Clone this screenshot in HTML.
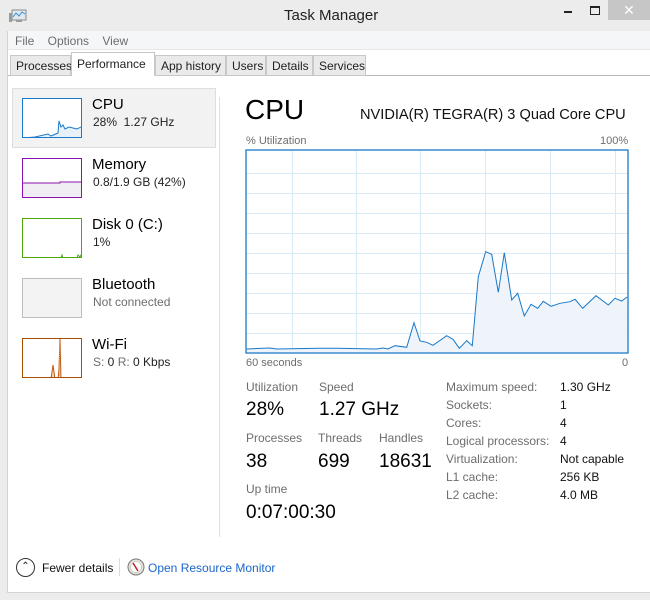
<!DOCTYPE html>
<html><head><style>
*{margin:0;padding:0;box-sizing:border-box}
body{width:650px;height:600px;overflow:hidden;background:#ececec;font-family:"Liberation Sans",sans-serif;position:relative;color:#000}
.a{position:absolute;white-space:nowrap}
.tab{position:absolute;top:55px;height:21px;border:1px solid #c8c8c8;background:#eaeaea;font-size:12px;padding:3px 0 0 5px;color:#222}
.lbl{font-size:12px;color:#6d6d6d}
.val{font-size:19px;color:#000}
.th{position:absolute;left:22px;width:60px;height:40px;background:#fff}
.sn{font-size:15px;color:#000}
.ss{font-size:12px;color:#222}
</style></head><body>
<div class="a" style="left:0;top:0;width:650px;height:31px;background:#ececec"></div>
<svg class="a" style="left:9px;top:9px" width="18" height="14"><rect x="3" y="1" width="14" height="10" fill="#dfe8ef" stroke="#8a8a8a"/><polyline points="4,8 7,4 10,7 13,3 16,5" fill="none" stroke="#3a8fd0" stroke-width="1"/><rect x="0" y="4" width="3" height="9" fill="#9a9a9a"/><rect x="7" y="11" width="6" height="2" fill="#9a9a9a"/></svg>
<div class="a" style="left:284px;top:7px;font-size:15px;color:#222">Task Manager</div>
<div class="a" style="left:564px;top:11px;width:8px;height:2px;background:#222"></div>
<div class="a" style="left:590px;top:6px;width:10px;height:9px;border:1px solid #222;border-top-width:2px"></div>
<div class="a" style="left:608px;top:0;width:42px;height:20px;background:#c6c6c6;color:#fff;font-size:14px;text-align:center;line-height:20px">✕</div>
<div class="a" style="left:7px;top:31px;width:643px;height:562px;background:#fff;border-left:1px solid #d4d4d4;border-bottom:1px solid #d4d4d4"></div>
<div class="a" style="left:8px;top:31px;width:642px;height:19px;background:#f5f6f7;border-bottom:1px solid #e6e6e6"></div>
<div class="a" style="left:15px;top:34px;font-size:12px;color:#6d6d6d">File&nbsp;&nbsp;&nbsp;&nbsp;Options&nbsp;&nbsp;&nbsp;&nbsp;View</div>
<div class="a" style="left:8px;top:75px;width:642px;height:1px;background:#b8b8b8"></div>
<div class="tab" style="left:10px;width:61px">Processes</div>
<div class="tab" style="left:71px;top:52px;height:24px;width:84px;background:#fff;border-bottom:none;padding-top:4px">Performance</div>
<div class="tab" style="left:155px;width:71px">App history</div>
<div class="tab" style="left:226px;width:40px">Users</div>
<div class="tab" style="left:266px;width:47px">Details</div>
<div class="tab" style="left:313px;width:53px">Services</div>
<div class="a" style="left:12px;top:88px;width:204px;height:60px;background:#f2f2f2;border:1px solid #dedede"></div>
<div class="a" style="left:219px;top:97px;width:1px;height:440px;background:#e0e0e0"></div>
<svg class="th" style="top:98px;border:1px solid #1979ca" width="60" height="40"><polyline points="0,39 12,38 25,35 28,37 35,34 36,22 38,28 40,26 42,30 46,28 50,29 54,30 58,28 60,29 60,40 0,40" fill="#e8f1f8" stroke="#1979ca" stroke-width="1"/></svg>
<div class="a sn" style="left:92px;top:96px">CPU</div>
<div class="a ss" style="left:93px;top:115px">28%&nbsp; 1.27 GHz</div>
<svg class="th" style="top:158px;border:1px solid #8b12ae" width="60" height="40"><polygon points="0,24 37,24 46,23 60,23 60,40 0,40" fill="#f1eef3"/><polyline points="0,24 37,24 37,23 46,23 60,23" fill="none" stroke="#8b12ae"/></svg>
<div class="a sn" style="left:92px;top:156px">Memory</div>
<div class="a ss" style="left:93px;top:175px">0.8/1.9 GB (42%)</div>
<svg class="th" style="top:218px;border:1px solid #4da60c" width="60" height="40"><polyline points="0,39 38,39 39,36 40,39 54,39 55,36 57,38 58,36 60,37" fill="none" stroke="#4da60c"/></svg>
<div class="a sn" style="left:92px;top:216px">Disk 0 (C:)</div>
<div class="a ss" style="left:93px;top:235px">1%</div>
<div class="th" style="top:278px;border:1px solid #bdbdbd;background:#f3f3f3"></div>
<div class="a sn" style="left:92px;top:276px">Bluetooth</div>
<div class="a ss" style="left:93px;top:295px;color:#6d6d6d">Not connected</div>
<svg class="th" style="top:338px;border:1px solid #a74f01" width="60" height="40"><polyline points="28,40 30,26 32,40 35,40 36,30 37,0 38,40" fill="#f3d8c0" stroke="#c05a10"/><line x1="36.5" y1="0" x2="36.5" y2="40" stroke="#e0a070" stroke-dasharray="1,1"/></svg>
<div class="a sn" style="left:92px;top:336px">Wi-Fi</div>
<div class="a ss" style="left:93px;top:355px"><span style="color:#6d6d6d">S:</span> 0 <span style="color:#6d6d6d">R:</span> 0 Kbps</div>
<div class="a" style="left:245px;top:94px;font-size:28px">CPU</div>
<div class="a" style="left:360px;top:107px;font-size:14.6px;color:#111">NVIDIA(R) TEGRA(R) 3 Quad Core CPU</div>
<div class="a lbl" style="left:246px;top:135px;font-size:11px">% Utilization</div>
<div class="a lbl" style="left:600px;top:135px;font-size:11px">100%</div>
<svg class="a" style="left:245px;top:149px" width="385" height="205">
<g stroke="#d9eaf7" stroke-width="1">
<line x1="1" y1="24.5" x2="383" y2="24.5"/><line x1="1" y1="44.5" x2="383" y2="44.5"/><line x1="1" y1="64.5" x2="383" y2="64.5"/><line x1="1" y1="84.5" x2="383" y2="84.5"/><line x1="1" y1="104.5" x2="383" y2="104.5"/><line x1="1" y1="124.5" x2="383" y2="124.5"/><line x1="1" y1="144.5" x2="383" y2="144.5"/><line x1="1" y1="164.5" x2="383" y2="164.5"/><line x1="1" y1="184.5" x2="383" y2="184.5"/>
<line x1="47.5" y1="1" x2="47.5" y2="203"/><line x1="111.5" y1="1" x2="111.5" y2="203"/><line x1="175.5" y1="1" x2="175.5" y2="203"/><line x1="240.5" y1="1" x2="240.5" y2="203"/><line x1="305.5" y1="1" x2="305.5" y2="203"/><line x1="370.5" y1="1" x2="370.5" y2="203"/>
</g>
<g transform="translate(-245,-149)">
<polygon fill="#eef4f9" points="246.7,349 270,348 276.7,349 320,348.3 336.7,348.3 376.7,349 383,348 388,349 395,345.7 406.7,347.3 414,322.7 420,341 426.7,342.3 433,345.3 446.7,335.7 453,339.3 459.3,348.3 466.7,340.7 472.3,345.7 478.3,276.7 485.7,251.7 491.7,254.3 498.3,292.3 504.3,252.7 511.7,300 517.7,293.3 524.3,316 531,304.3 537.7,308.3 543.3,301.3 551,306.3 560,303.3 570,301.7 575,299.3 582.7,308.3 596,295.7 608.3,305 615,298.3 621.7,301 627,297 627,352 246.7,352"/>
<polyline fill="none" stroke="#1979ca" stroke-width="1" points="246.7,349 270,348 276.7,349 320,348.3 336.7,348.3 376.7,349 383,348 388,349 395,345.7 406.7,347.3 414,322.7 420,341 426.7,342.3 433,345.3 446.7,335.7 453,339.3 459.3,348.3 466.7,340.7 472.3,345.7 478.3,276.7 485.7,251.7 491.7,254.3 498.3,292.3 504.3,252.7 511.7,300 517.7,293.3 524.3,316 531,304.3 537.7,308.3 543.3,301.3 551,306.3 560,303.3 570,301.7 575,299.3 582.7,308.3 596,295.7 608.3,305 615,298.3 621.7,301 627,297"/>
</g>
<rect x="1" y="1" width="382" height="203" fill="none" stroke="#1979ca" stroke-width="1.3"/>
</svg>
<div class="a lbl" style="left:246px;top:357px;font-size:11px">60 seconds</div>
<div class="a lbl" style="left:622px;top:357px;font-size:11px">0</div>
<div class="a lbl" style="left:246px;top:380px">Utilization</div>
<div class="a lbl" style="left:319px;top:380px">Speed</div>
<div class="a val" style="left:246px;top:399px">28%</div>
<div class="a val" style="left:319px;top:399px">1.27 GHz</div>
<div class="a lbl" style="left:246px;top:431px">Processes</div>
<div class="a lbl" style="left:318px;top:431px">Threads</div>
<div class="a lbl" style="left:379px;top:431px">Handles</div>
<div class="a val" style="left:246px;top:451px">38</div>
<div class="a val" style="left:318px;top:451px">699</div>
<div class="a val" style="left:379px;top:451px">18631</div>
<div class="a lbl" style="left:246px;top:482px">Up time</div>
<div class="a val" style="left:246px;top:502px">0:07:00:30</div>
<div class="a" style="left:446px;top:378px;font-size:12px;line-height:18px;color:#6d6d6d">Maximum speed:<br>Sockets:<br>Cores:<br>Logical processors:<br>Virtualization:<br>L1 cache:<br>L2 cache:</div>
<div class="a" style="left:560px;top:378px;font-size:12px;line-height:18px;color:#111">1.30 GHz<br>1<br>4<br>4<br>Not capable<br>256 KB<br>4.0 MB</div>
<div class="a" style="left:16px;top:558px;width:19px;height:19px;border:1.3px solid #333;border-radius:50%;font-size:10px;text-align:center;line-height:16px;color:#222">⌃</div>
<div class="a" style="left:42px;top:561px;font-size:12px;color:#111">Fewer details</div>
<div class="a" style="left:119px;top:558px;width:1px;height:18px;background:#dcdcdc"></div>
<svg class="a" style="left:127px;top:558px" width="18" height="18"><circle cx="9" cy="9" r="8" fill="#e8e4dc" stroke="#777"/><circle cx="9" cy="9" r="5.5" fill="#fff" stroke="#aaa" stroke-width=".5"/><line x1="6" y1="5" x2="11" y2="13" stroke="#c42020" stroke-width="1.5"/></svg>
<div class="a" style="left:148px;top:561px;font-size:12px;color:#1a66cc">Open Resource Monitor</div>
</body></html>
